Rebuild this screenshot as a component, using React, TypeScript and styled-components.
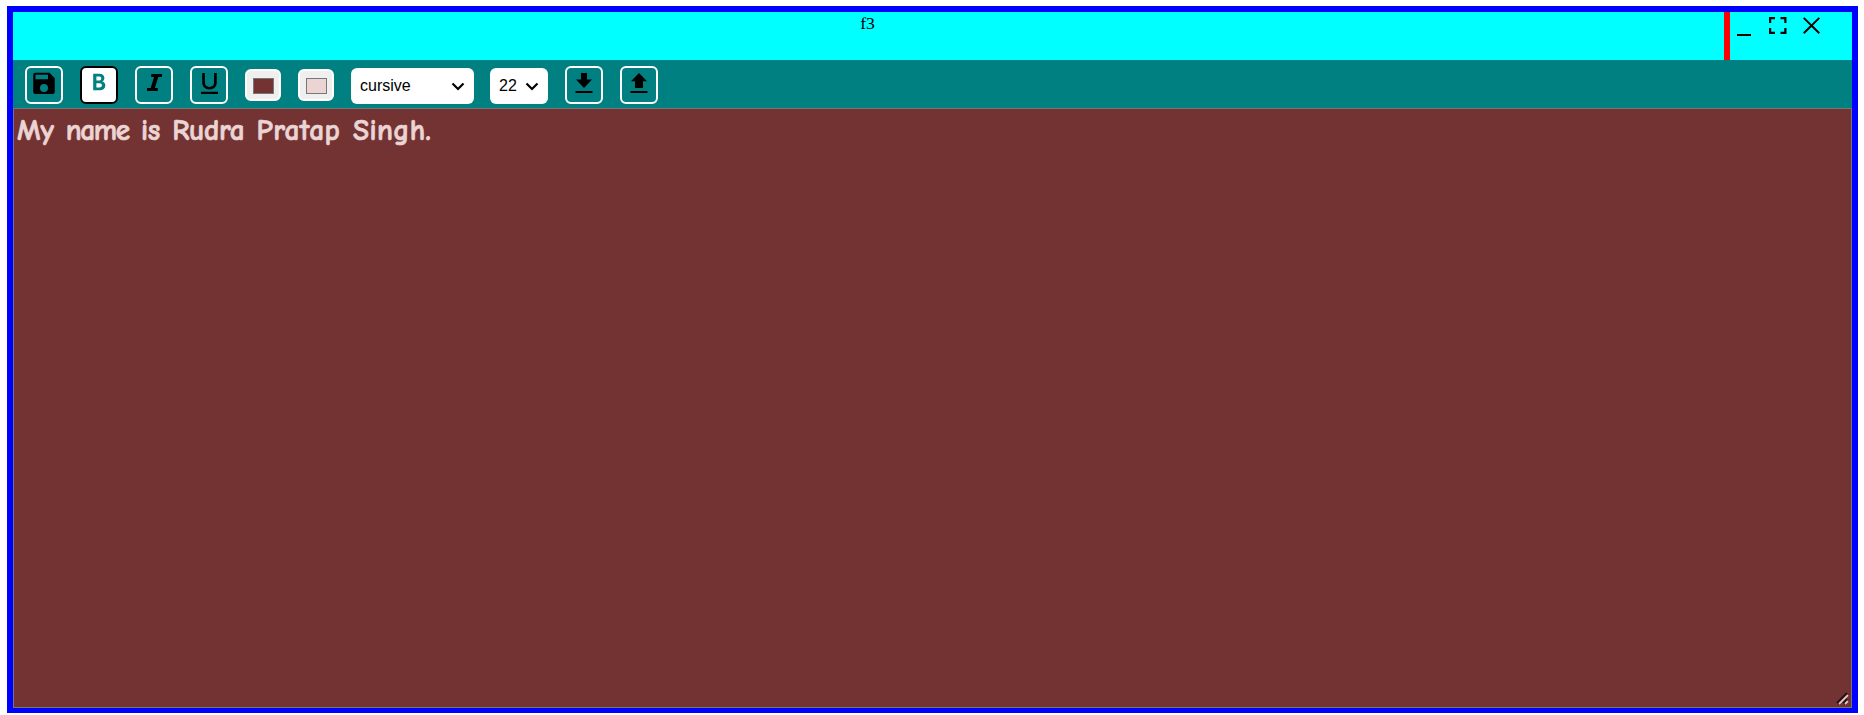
import React from "react";
import styled, { createGlobalStyle } from "styled-components";

const Global = createGlobalStyle`
  * { box-sizing: border-box; }
  body { margin: 0; background: #fff; }
`;
const Window = styled.div`
  margin: 6px 6px 0 7px;
  height: 707px;
  border: 6px solid #00f;
  border-bottom-width: 5px;
  display: flex;
  flex-direction: column;
`;
const TitleBar = styled.header`
  height: 48px;
  flex: none;
  display: flex;
  background: #0ff;
`;
const Title = styled.div`
  flex: 1;
  text-align: center;
  font: 17.600px/20px "Liberation Serif", serif;
  padding: 1px 2px 0 0;
`;
const Controls = styled.div`
  width: 128px;
  border-left: 6px solid red;
  display: flex;
  padding: 2px 0 0 2px;
  gap: 10px;
`;
const Glyph = styled.svg`
  width: 24px;
  height: 24px;
  display: block;
  flex: none;
  fill: #000;
`;
const ToolBar = styled.div`
  height: 48px;
  flex: none;
  display: flex;
  align-items: center;
  padding: 2px 12px 0;
  gap: 17px;
  background: #008080;
`;
const ToolButton = styled.button<{ $active?: boolean }>`
  width: 38px;
  height: 38px;
  flex: none;
  padding: 2px 5px;
  border: 2px solid ${(p) => (p.$active ? "#000" : "#fff")};
  border-radius: 6px;
  background: ${(p) => (p.$active ? "#fff" : "transparent")};
  display: flex;
  align-items: flex-start;
  svg { fill: ${(p) => (p.$active ? "#008080" : "#000")}; }
`;
const Swatch = styled.div<{ $color: string }>`
  width: 36px;
  height: 32px;
  flex: none;
  border: 2px solid #fff;
  border-radius: 6px;
  background: #efefef;
  padding: 7px 5px 7px 6px;
  &::before {
    content: "";
    display: block;
    height: 14px;
    border: 1px solid #777;
    background: ${(p) => p.$color};
  }
`;
const Select = styled.div<{ $width: number }>`
  width: ${(p) => p.$width}px;
  height: 36px;
  flex: none;
  margin-top: 2px;
  background: #fff;
  border-radius: 6px;
  padding: 0 9px;
  display: flex;
  align-items: center;
  justify-content: space-between;
  font: 16px "Liberation Sans", sans-serif;
  & + & { margin-left: -1px; }
`;
const Editor = styled.div`
  flex: 1;
  position: relative;
  border: 1px solid #767676;
  background: #733333;
  color: #ebd4d4;
  padding: 1px 3px;
  font: 700 29.333px/41px "Comic Sans MS", "Comic Neue", cursive;
  white-space: pre;
  letter-spacing: -0.25px;
  word-spacing: 2px;
  -webkit-text-stroke: 0.7px #ebd4d4;
`;
const Word = styled.span<{ $tracking: number }>`
  letter-spacing: ${(p) => p.$tracking}px;
`;
const Grip = styled.svg`
  position: absolute;
  right: 2px;
  bottom: 2px;
  width: 13px;
  height: 13px;
  fill: none;
`;

const Icon = ({ d }: { d: string }) => (
  <Glyph viewBox="0 0 24 24"><path d={d} fillRule="evenodd" /></Glyph>
);
const Chevron = () => (
  <svg width="14" height="9" viewBox="0 0 14 9"><path d="M1.500 1.500L7 7l5.500-5.500" fill="none" stroke="#000" strokeWidth="2.200" /></svg>
);

const icons = {
  save: "M17.500 2.800H3.500A2.300 2.300 0 0 0 1.200 5.100v16.700a2.300 2.300 0 0 0 2.300 2.200h17a2.300 2.300 0 0 0 2.300-2.200V8.200zM12 22a4 4 0 1 1 0-8 4 4 0 0 1 0 8zM16 9.300H3.500V4.800H16z",
  bold: "M6.200 20.200V3.800h6.300q2.300 0 3.600 1.200t1.300 3.200q0 2.300-2.100 3.300 3 .9 3 4 0 2.200-1.500 3.400t-3.900 1.300zM9.400 10.400h3q1.900 0 1.900-1.900t-1.900-1.900h-3zM9.400 17.400h3.400q2.200 0 2.200-2.100t-2.200-2.100H9.400z",
  italic: "M5 21v-3h3.700l3.400-11H9.200V4H20v3h-3.700l-3.400 11h2.900v3z",
  underline: "M12.500 19.500c4.400 0 7.300-2.700 7.300-7.200V3h-2.700v9.300c0 2.900-1.700 4.600-4.600 4.600s-4.600-1.700-4.600-4.600V3H5.200v9.300c0 4.500 2.900 7.200 7.300 7.200zM4 21.800h17V24H4z",
  download: "M9 3h6v6.500h5L12 18l-8-8.500h5zM3.500 21h17v2h-17z",
  upload: "M12 3l8 8.200h-4V18H8v-6.800H4zM3.500 21h17v2h-17z",
  minimize: "M5 20h14v2H5z",
  maximize: "M3 3h6v2.200H5.200V9H3zM14.500 3h6v6h-2.200V5.200h-3.800zM3 14h2.200v3.800H9V20H3zM18.300 14h2.200v6h-6v-2.200h3.800z",
  close: "M4.400 3.200l7.100 7 7.100-7 1.400 1.400-7.100 6.900 7.100 7-1.400 1.400-7.100-7-7.100 7L3 18.500l7.100-7L3 4.600z",
};

export default function App() {
  return (
    <>
      <Global />
      <Window>
        <TitleBar>
          <Title>f3</Title>
          <Controls>
            <Icon d={icons.minimize} />
            <Icon d={icons.maximize} />
            <Icon d={icons.close} />
          </Controls>
        </TitleBar>
        <ToolBar>
          <ToolButton aria-label="Save"><Icon d={icons.save} /></ToolButton>
          <ToolButton $active aria-label="Bold"><Icon d={icons.bold} /></ToolButton>
          <ToolButton aria-label="Italic"><Icon d={icons.italic} /></ToolButton>
          <ToolButton aria-label="Underline"><Icon d={icons.underline} /></ToolButton>
          <Swatch $color="#733333" />
          <Swatch $color="#ebd4d4" />
          <Select $width={123}>cursive<Chevron /></Select>
          <Select $width={58}>22<Chevron /></Select>
          <ToolButton aria-label="Download"><Icon d={icons.download} /></ToolButton>
          <ToolButton aria-label="Upload"><Icon d={icons.upload} /></ToolButton>
        </ToolBar>
        <Editor>
          My <Word $tracking={-1.4}>name</Word> is Rudra <Word $tracking={0.4}>Pratap Singh.</Word>
          <Grip viewBox="0 0 13 13">
            <path d="M1.500 11.500l10-10M7.500 11.500l4-4" stroke="#2a1010" strokeWidth="3.500" />
            <path d="M3 12l9-9M9 12l3-3" stroke="#dcc6c6" strokeWidth="1.800" />
          </Grip>
        </Editor>
      </Window>
    </>
  );
}
